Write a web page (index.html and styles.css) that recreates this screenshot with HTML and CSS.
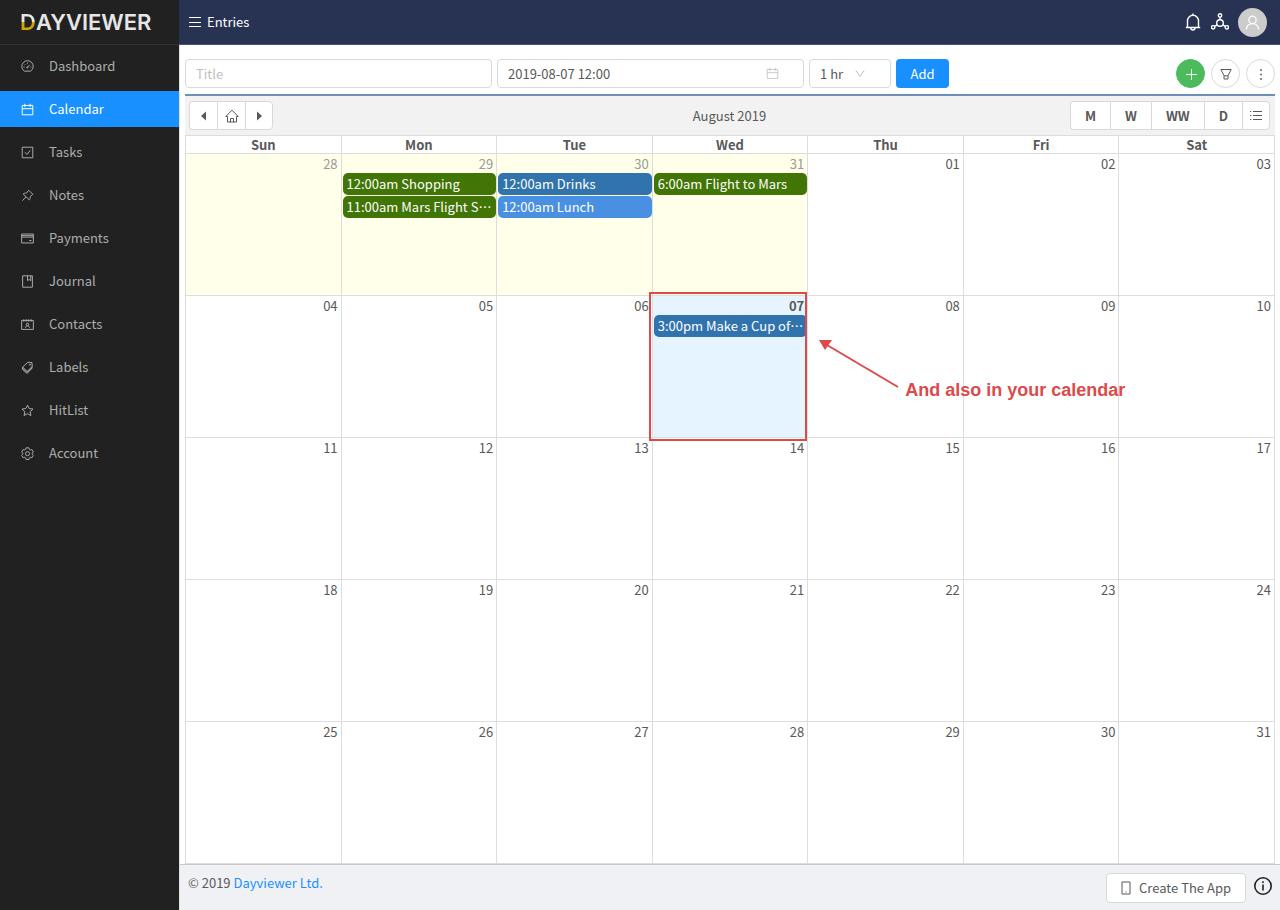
FILE: index.html
```html
<!DOCTYPE html>
<html lang="en">
<head>
<meta charset="utf-8">
<title>Dayviewer</title>
<link rel="stylesheet" href="styles.css">
</head>
<body>
<div class="app">
  <aside class="sidebar">
    <a class="logo" href="#"><span class="logo-d">D</span>AYVIEWER</a>
    <nav class="menu">
      <a class="item" href="#"><svg class="icon" viewBox="0 0 16 16"><path d="M4.200 13.700A7 7 0 1 1 11.800 13.700Z"/><path d="M7.700 9.200l3-3.200M8 3.200v1.300M3.200 8.700h1.200M11.600 8.700h1.200M4.600 5.200l.8.8"/><circle cx="7.700" cy="9.200" r=".7"/></svg>Dashboard</a>
      <a class="item active" href="#"><svg class="icon" viewBox="0 0 16 16"><path d="M1.500 3h13v11.500h-13zM1.500 7h13M4.800 1v4M11.200 1v4"/></svg>Calendar</a>
      <a class="item" href="#"><svg class="icon" viewBox="0 0 16 16"><path d="M1.500 1.500h13v13h-13zM5 7.700l2.400 2.700 4-5"/></svg>Tasks</a>
      <a class="item" href="#"><svg class="icon" viewBox="0 0 16 16"><path d="M9.500 1.500l5 5-3.300 3c.3 1.700-.1 2.900-1 3.900L2.700 6.200c1-1 2.500-1.300 3.900-1.100zM6.200 9.700l-4.600 4.700"/></svg>Notes</a>
      <a class="item" href="#"><svg class="icon" viewBox="0 0 16 16"><path d="M.8 2.500h14.400v11H.8zM.8 4.500h14.400M.8 6.300h14.400M10 10.500h3"/></svg>Payments</a>
      <a class="item" href="#"><svg class="icon" viewBox="0 0 16 16"><path d="M2 1h12v14H2zM8 1v6l2-1.500L12 7V1"/></svg>Journal</a>
      <a class="item" href="#"><svg class="icon" viewBox="0 0 16 16"><path d="M.8 3h14.400v11H.8zM3.500 1.500v3M6.500 1.500v3M9.500 1.500v3M12.500 1.500v3M5.500 12c.2-3.200 4.800-3.200 5 0"/><circle cx="8" cy="7.800" r="1.500"/></svg>Contacts</a>
      <a class="item" href="#"><svg class="icon" viewBox="0 0 16 16"><path d="M8.500 1.500l5 .5.300 4.800-6.200 6L2 7.500zM2 7.500L1.600 10l5.700 5.300 6.200-6.100.3-2.400M1.800 8.800l5.600 5.300 6.200-6"/><circle cx="11" cy="4.500" r=".7"/></svg>Labels</a>
      <a class="item" href="#"><svg class="icon" viewBox="0 0 16 16"><path d="M8 1.300l2 4.300 4.800.6-3.500 3.300.9 4.700L8 11.900l-4.200 2.300.9-4.700L1.200 6.200 6 5.600z"/></svg>HitList</a>
      <a class="item" href="#"><svg class="icon" viewBox="0 0 16 16"><path d="M6.300 1h3.400l.6 2 1.200.7 2-.5 1.700 2.900-1.400 1.500v1.200l1.400 1.500-1.700 2.900-2-.5-1.200.7-.6 2H6.300l-.6-2-1.200-.7-2 .5-1.700-2.900 1.400-1.500V7.600L.8 6.100l1.700-2.900 2 .5L5.700 3z"/><circle cx="8" cy="8.200" r="2.500"/></svg>Account</a>
    </nav>
  </aside>

  <div class="page">
    <header class="topbar">
      <button class="plain menu-toggle" type="button"><svg class="burger" viewBox="0 0 12 12"><path d="M0 1.500h12M0 6.500h12M0 10.500h12"/></svg>Entries</button>
      <div class="top-actions">
        <button class="plain" type="button" aria-label="Notifications"><svg class="top-icon" viewBox="0 0 18 18"><path d="M3.500 14.500V7.800a5.500 5.500 0 0 1 11 0v6.700M1.800 14.500h14.400M9 .5v2M6.800 14.800a2.200 2.200 0 0 0 4.400 0"/></svg></button>
        <button class="plain" type="button" aria-label="Network"><svg class="top-icon" viewBox="0 0 18 18"><circle cx="9" cy="10" r="3.300"/><circle cx="9" cy="2.500" r="1.700"/><circle cx="2.200" cy="14.300" r="1.700"/><circle cx="15.800" cy="14.300" r="1.700"/><path d="M9 4.200v2.500M6.200 11.800l-2.600 1.600M11.800 11.800l2.600 1.600"/></svg></button>
        <button class="avatar" type="button" aria-label="Profile"><svg class="person" viewBox="0 0 16 16"><circle cx="8" cy="5.200" r="3.900"/><path d="M1.500 15.500C2 7 14 7 14.500 15.500"/></svg></button>
      </div>
    </header>

    <main class="content">
      <form class="toolbar">
        <input class="field title-field" type="text" placeholder="Title" aria-label="Title">
        <label class="date-wrap"><input class="field" type="text" value="2019-08-07 12:00" aria-label="Date"><svg class="date-icon" viewBox="0 0 16 16"><path d="M1.500 3h13v11h-13zM1.500 7h13M4.800 1v4M11.200 1v4"/></svg></label>
        <label class="select-wrap"><select class="field" aria-label="Duration"><option>1 hr</option><option>2 hr</option></select><svg class="chevron" viewBox="0 0 10 10"><path d="M.8 1.500L5 7.500l4.200-6"/></svg></label>
        <button class="add" type="button">Add</button>
        <div class="round-group">
          <button class="round green" type="button" aria-label="New"><svg class="glyph" viewBox="0 0 12 12"><path d="M6.500 1v11M1 6.500h11"/></svg></button>
          <button class="round" type="button" aria-label="Filter"><svg class="glyph" viewBox="0 0 12 12"><path d="M.8 1.500h10.400L8 7.500V11H4V7.500zM4 7.800h4"/></svg></button>
          <button class="round" type="button" aria-label="More"><svg class="glyph dots" viewBox="0 0 12 12"><circle cx="6" cy="2" r=".9"/><circle cx="6" cy="6.500" r=".9"/><circle cx="6" cy="11" r=".9"/></svg></button>
        </div>
      </form>

      <section class="calendar-bar">
        <div class="group">
          <button type="button" class="cell-btn" aria-label="Previous"><svg class="tri" viewBox="0 0 8 10"><path d="M6 .5v9L1 5z"/></svg></button>
          <button type="button" class="cell-btn" aria-label="Today"><svg class="home" viewBox="0 0 14 14"><path d="M.8 7.500L7 1.200l6.200 6.300H11.500V13h-9V7.500zM5.500 13V9.500h3V13"/></svg></button>
          <button type="button" class="cell-btn" aria-label="Next"><svg class="tri" viewBox="0 0 8 10"><path d="M2 .5v9L7 5z"/></svg></button>
        </div>
        <div class="month">August 2019</div>
        <div class="group views">
          <button type="button" class="view-btn">M</button>
          <button type="button" class="view-btn">W</button>
          <button type="button" class="view-btn">WW</button>
          <button type="button" class="view-btn">D</button>
          <button type="button" class="cell-btn" aria-label="List"><svg class="list" viewBox="0 0 12 12"><path d="M3 1.500h9M3 5.500h9M3 9.500h9M0 1.500h1.200M0 5.500h1.200M0 9.500h1.200"/></svg></button>
        </div>
      </section>

      <table class="calendar">
        <thead><tr><th>Sun</th><th>Mon</th><th>Tue</th><th>Wed</th><th>Thu</th><th>Fri</th><th>Sat</th></tr></thead>
        <tbody>
          <tr>
            <td class="past"><span class="num">28</span></td>
            <td class="past"><span class="num">29</span><a class="event green-ev" href="#">12:00am Shopping</a><a class="event green-ev" href="#">11:00am Mars Flight School</a></td>
            <td class="past"><span class="num">30</span><a class="event blue-ev" href="#">12:00am Drinks</a><a class="event sky-ev" href="#">12:00am Lunch</a></td>
            <td class="past"><span class="num">31</span><a class="event green-ev" href="#">6:00am Flight to Mars</a></td>
            <td><span class="num">01</span></td><td><span class="num">02</span></td><td><span class="num">03</span></td>
          </tr>
          <tr>
            <td><span class="num">04</span></td><td><span class="num">05</span></td><td><span class="num">06</span></td>
            <td class="today"><span class="num">07</span><a class="event blue-ev" href="#">3:00pm Make a Cup of Tea</a>
              <div class="frame"></div>
              <div class="callout"><svg class="arrow" viewBox="0 0 80 50"><path class="shaft" d="M8 6l71 42"/><path class="head" d="M0 1h13l-7 10z"/></svg><span>And also in your calendar</span></div>
            </td>
            <td><span class="num">08</span></td><td><span class="num">09</span></td><td><span class="num">10</span></td>
          </tr>
          <tr><td><span class="num">11</span></td><td><span class="num">12</span></td><td><span class="num">13</span></td><td><span class="num">14</span></td><td><span class="num">15</span></td><td><span class="num">16</span></td><td><span class="num">17</span></td></tr>
          <tr><td><span class="num">18</span></td><td><span class="num">19</span></td><td><span class="num">20</span></td><td><span class="num">21</span></td><td><span class="num">22</span></td><td><span class="num">23</span></td><td><span class="num">24</span></td></tr>
          <tr><td><span class="num">25</span></td><td><span class="num">26</span></td><td><span class="num">27</span></td><td><span class="num">28</span></td><td><span class="num">29</span></td><td><span class="num">30</span></td><td><span class="num">31</span></td></tr>
        </tbody>
      </table>
    </main>

    <footer class="footer">
      <p class="copy">© 2019 <a href="#">Dayviewer Ltd.</a></p>
      <button class="create" type="button"><svg class="phone" viewBox="0 0 10 14"><path d="M1 1h8v12H1z"/><path d="M4.500 11h1"/></svg>Create The App</button>
      <button class="plain info" type="button" aria-label="Info"><svg class="info-icon" viewBox="0 0 18 18"><circle cx="9" cy="9" r="8.200"/><path d="M9 7.500v6M9 4.300v1.800"/></svg></button>
    </footer>
  </div>
</div>
</body>
</html>
```
FILE: styles.css
```css
* { box-sizing: border-box; }
body {
  margin: 0;
  font: 13px/20px "Noto Sans CJK SC", "Open Sans", sans-serif;
  color: #595959;
}
a { text-decoration: none; }
button, input, select { font: inherit; color: inherit; margin: 0; }
button { padding: 0; cursor: pointer; }
svg { display: block; flex: none; fill: none; stroke: currentColor; }

.app { display: flex; min-height: 100vh; }
.sidebar { flex: none; width: 179px; background: #212121; }
.logo {
  display: flex;
  align-items: center;
  height: 45px;
  padding-left: 20px;
  border-bottom: 1px solid #333;
  font: 600 22px/44px Inter, sans-serif;
  color: #e6e6e6;
}
.logo-d {
  background: linear-gradient(#e6e6e6 50%, #d4a500 50%);
  -webkit-background-clip: text;
  background-clip: text;
  color: transparent;
}
.menu { display: flex; flex-direction: column; gap: 7px; padding-top: 3px; }
.item {
  display: flex;
  align-items: center;
  gap: 15px;
  height: 36px;
  padding-left: 21px;
  color: #adadad;
}
.item.active { background: #1890ff; color: #fff; }
.icon { width: 13px; height: 13px; stroke-width: 1.2; }

.page {
  flex: 1;
  min-width: 0;
  display: flex;
  flex-direction: column;
  border-left: 1px solid #e0e0e0;
}
.topbar {
  display: flex;
  align-items: center;
  justify-content: space-between;
  height: 45px;
  margin-left: -1px;
  padding: 0 13px 0 10px;
  background: #283353;
  border-bottom: 1px solid #4b546c;
  color: #fff;
}
.plain { border: 0; background: none; }
.menu-toggle { display: flex; align-items: center; gap: 6px; }
.burger { width: 12px; height: 12px; }
.top-actions { display: flex; align-items: center; gap: 9px; }
.top-icon { width: 18px; height: 18px; stroke-width: 1.4; }
.avatar {
  display: grid;
  place-items: center;
  width: 29px;
  height: 29px;
  border: 0;
  border-radius: 50%;
  background: #ccc;
}
.person { width: 15px; height: 15px; stroke: #fff; stroke-width: 1.3; }

.content { flex: 1; padding: 0 5px; }
.toolbar { display: flex; align-items: center; gap: 5px; padding: 14px 0 6px; }
.field {
  width: 100%;
  height: 29px;
  padding: 0 10px;
  border: 1px solid #d9d9d9;
  border-radius: 4px;
  background: #fff;
  outline: 0;
}
.field::placeholder { color: #bfbfbf; }
.title-field, .date-wrap { flex: 0 1 307px; width: 307px; }
.date-wrap, .select-wrap { position: relative; }
.date-wrap .field, .select-wrap .field { display: block; }
.date-icon { position: absolute; right: 25px; top: 8px; width: 13px; height: 13px; color: #bfbfbf; }
.select-wrap { flex: none; width: 82px; }
select.field { appearance: none; }
.chevron { position: absolute; right: 26px; top: 10px; width: 10px; height: 10px; color: #bfbfbf; }
.add { width: 53px; height: 29px; border: 0; border-radius: 4px; background: #1890ff; color: #fff; }
.round-group { display: flex; gap: 6px; margin-left: auto; }
.round {
  display: grid;
  place-items: center;
  width: 29px;
  height: 29px;
  border: 1px solid #d9d9d9;
  border-radius: 50%;
  background: #fff;
}
.round.green { background: #4cbb5b; border-color: #4cbb5b; color: #fff; }
.glyph { width: 12px; height: 12px; }
.dots { fill: currentColor; stroke: none; }

.calendar-bar {
  display: grid;
  grid-template-columns: 1fr auto 1fr;
  align-items: center;
  padding: 5px 5px 5px 4px;
  border-top: 2px solid #6f90bb;
  background: #f2f2f2;
}
.group { display: flex; justify-self: start; }
.views { justify-self: end; }
.group button {
  display: grid;
  place-items: center;
  height: 29px;
  border: 1px solid #d9d9d9;
  border-right-width: 0;
  background: #fff;
}
.group button:first-child { border-radius: 4px 0 0 4px; }
.group button:last-child { border-radius: 0 4px 4px 0; border-right-width: 1px; }
.cell-btn { width: 28px; }
.view-btn { padding: 0 14px; font-weight: 700; }
.tri { width: 8px; height: 10px; fill: currentColor; stroke: none; }
.home { width: 14px; height: 14px; }
.list { width: 12px; height: 12px; }

.calendar { width: 100%; table-layout: fixed; border-collapse: collapse; }
.calendar th, .calendar td { padding: 0; border: 1px solid #ddd; }
.calendar th { height: 18px; line-height: 17px; }
.calendar td { position: relative; height: 142px; vertical-align: top; }
.num { display: block; height: 19px; padding-right: 3px; text-align: right; }
.past { background: #ffffea; }
.past .num { color: #999; }
.today { background: #e6f4ff; }
.today .num { font-weight: 700; }
.event {
  display: block;
  height: 22px;
  margin: 0 0 1px 1px;
  padding: 0 4px;
  border-radius: 5px;
  line-height: 22px;
  color: #fff;
  overflow: hidden;
  white-space: nowrap;
  text-overflow: ellipsis;
}
.green-ev { background: #417505; }
.blue-ev { background: #3174ad; }
.sky-ev { background: #4a90e2; }
.frame { position: absolute; inset: -4px 0 -4px -4px; border: 2px solid #dc4a4a; z-index: 1; }
.callout {
  position: absolute;
  left: 100%;
  top: 43px;
  z-index: 1;
  display: flex;
  align-items: flex-end;
  gap: 6px;
  padding-left: 12px;
  font: 700 18px/20px "Liberation Sans", Arial, sans-serif;
  white-space: nowrap;
  color: #dc4a4a;
}
.callout span { margin-bottom: -11px; }
.arrow { width: 80px; height: 50px; }
.shaft { stroke-width: 2; }
.head { fill: currentColor; stroke: none; }

.footer {
  display: flex;
  align-items: flex-start;
  min-height: 47px;
  padding: 8px 8px 8px;
  border-top: 1px solid #c8c8c8;
  background: #f0f1f5;
}
.copy { margin: 0 auto 0 0; }
.copy a { color: #1890ff; }
.create {
  display: flex;
  align-items: center;
  gap: 8px;
  height: 30px;
  padding: 0 14px;
  border: 1px solid #d9d9d9;
  border-radius: 4px;
  background: #fff;
}
.phone { width: 10px; height: 14px; }
.info { margin: 4px 0 0 8px; color: #222; }
.info-icon { width: 18px; height: 18px; stroke-width: 1.6; }
```
